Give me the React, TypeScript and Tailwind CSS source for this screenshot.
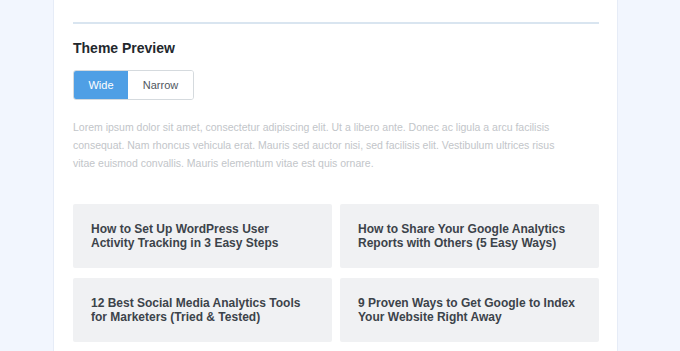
export default function App() {
  const cards = [
    "How to Set Up WordPress User Activity Tracking in 3 Easy Steps",
    "How to Share Your Google Analytics Reports with Others (5 Easy Ways)",
    "12 Best Social Media Analytics Tools for Marketers (Tried & Tested)",
    "9 Proven Ways to Get Google to Index Your Website Right Away",
  ];
  return (
    <div className="w-[680px] h-[351px] overflow-hidden bg-[#f2f6fe] flex font-['Liberation_Sans',Arial,sans-serif]">
      <div className="ml-[53px] w-[565px] h-full bg-white border-x border-[#e6ecf7] pl-[19px] pr-[18px] pt-[22px]">
        <div className="h-[2px] bg-[#d9e5f0]" />
        <h2 className="mt-[14px] text-[14px] leading-[20px] font-bold text-[#23282d]">
          Theme Preview
        </h2>
        <div className="mt-[12px] flex">
          <div className="flex rounded-[3px] border border-[#d5dade] overflow-hidden h-[30px]">
            <button className="w-[54px] bg-[#4f9fe5] text-white text-[11px] flex items-center justify-center">
              Wide
            </button>
            <button className="w-[65px] bg-white text-[#50575e] text-[11px] flex items-center justify-center">
              Narrow
            </button>
          </div>
        </div>
        <p className="mt-[18px] w-[490px] text-[10.5px] leading-[18px] text-[#c2c5c9]">
          Lorem ipsum dolor sit amet, consectetur adipiscing elit. Ut a libero ante. Donec ac ligula a arcu facilisis consequat. Nam rhoncus vehicula erat. Mauris sed auctor nisi, sed facilisis elit. Vestibulum ultrices risus vitae euismod convallis. Mauris elementum vitae est quis ornare.
        </p>
        <div className="mt-[32px] grid grid-cols-2 gap-x-[8px] gap-y-[10px]">
          {cards.map((c) => (
            <div
              key={c}
              className="h-[64px] bg-[#f0f1f3] rounded-[2px] flex items-center pl-[18px] pr-[20px]"
            >
              <span className="text-[12px] leading-[14.5px] font-bold text-[#3c434a]">{c}</span>
            </div>
          ))}
        </div>
      </div>
    </div>
  );
}
